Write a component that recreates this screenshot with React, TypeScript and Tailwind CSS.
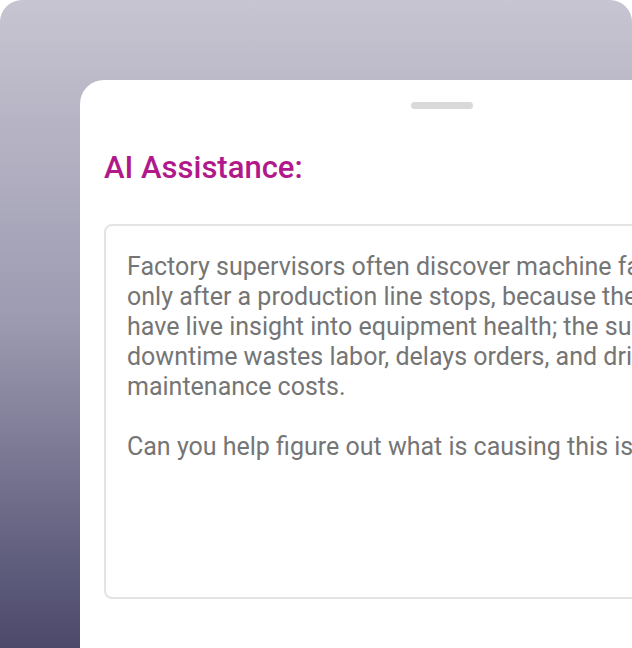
export default function App() {
  const lines = [
    "Factory supervisors often discover machine failures",
    "only after a production line stops, because they don't",
    "have live insight into equipment health; the sudden",
    "downtime wastes labor, delays orders, and drives up",
    "maintenance costs.",
  ];

  return (
    <div className="w-[632px] h-[648px] bg-white overflow-hidden" style={{ fontFamily: "Roboto, 'Liberation Sans', sans-serif" }}>
      <div className="flex h-full w-full rounded-t-[22px] bg-gradient-to-b from-[#c7c5d1] via-[#9c9ab0] to-[#4c496b] pl-[80px] pt-[80px]">
        {/* Sheet */}
        <div className="flex w-[724px] shrink-0 flex-col rounded-tl-[24px] bg-white px-6">
          <div className="flex justify-center pt-[22px]">
            <div className="h-[7px] w-[62px] rounded-full bg-[#d9d9d9]" />
          </div>
          <h2 className="mt-[41px] text-[31px] leading-[36px] font-medium text-[#b1198b]">
            AI Assistance:
          </h2>
          <div className="mt-[38px] h-[375px] rounded-lg border-2 border-[#e4e4e4] px-[21px] pt-[26px]">
            <p className="whitespace-nowrap text-[25px] leading-[30px] text-[#757575]">
              {lines.map((l) => (
                <span key={l} className="block">{l}</span>
              ))}
            </p>
            <p className="mt-[30px] whitespace-nowrap text-[25px] leading-[30px] text-[#757575]">
              Can you help figure out what is causing this issue?
            </p>
          </div>
        </div>
      </div>
    </div>
  );
}
